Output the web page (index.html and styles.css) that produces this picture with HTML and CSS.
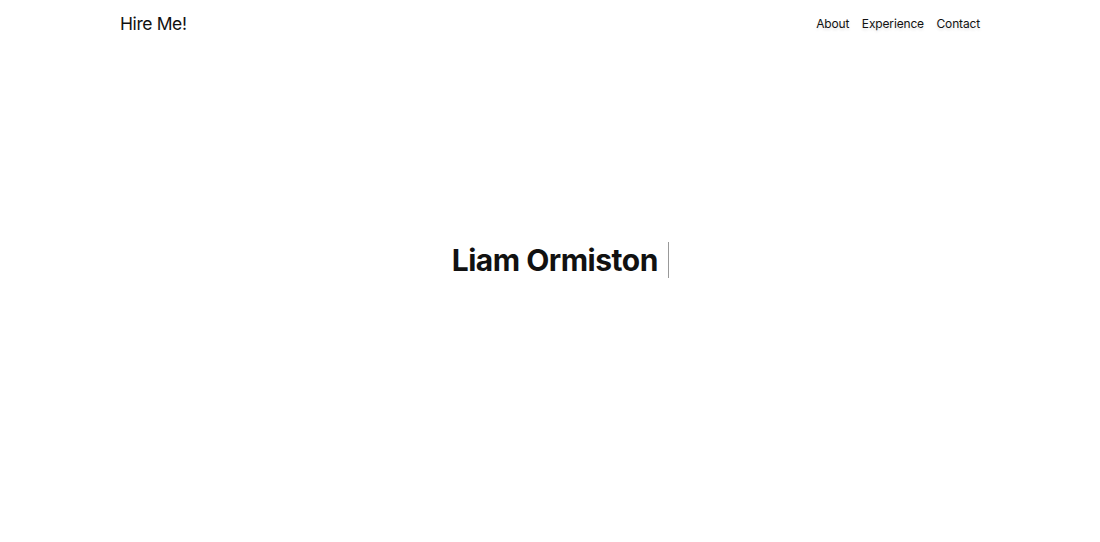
FILE: index.html
```html
<!DOCTYPE html>
<html lang="en">
<head>
<meta charset="utf-8">
<title>Hire Me!</title>
<link rel="stylesheet" href="styles.css">
</head>
<body>
<header class="header">
  <div class="brand">Hire Me!</div>
  <nav class="nav">
    <a href="#about">About</a>
    <a href="#experience">Experience</a>
    <a href="#contact">Contact</a>
  </nav>
</header>
<main class="hero">
  <h1 class="name">Liam Ormiston<span class="cursor"></span></h1>
</main>
</body>
</html>
```

FILE: styles.css
```css
* { box-sizing: border-box; }
html, body { margin: 0; padding: 0; }
body {
  font-family: Inter, "Noto Sans", sans-serif;
  color: #111;
  background: #fff;
  height: 542px;
  display: flex;
  flex-direction: column;
}
.header {
  width: 860px;
  margin: 0 auto;
  display: flex;
  justify-content: space-between;
  align-items: center;
  padding-top: 12px;
}
.brand {
  font-size: 17.5px;
  letter-spacing: -0.4px;
  font-weight: 400;
  color: #111;
  margin-top: 1px;
}
.nav {
  display: flex;
  gap: 12.5px;
}
.nav a {
  font-size: 12px;
  letter-spacing: -0.15px;
  color: #111;
  text-decoration: none;
  text-shadow: 0 2px 3px rgba(0,0,0,0.12);
}
.hero {
  flex: 1;
  display: flex;
  justify-content: center;
  align-items: center;
  padding-bottom: 56px;
  padding-left: 21px;
}
.name {
  margin: 0;
  font-size: 30px;
  letter-spacing: -0.5px;
  font-weight: 700;
  display: flex;
  align-items: center;
}
.cursor {
  display: inline-block;
  width: 1.5px;
  height: 36px;
  background: #999;
  margin-left: 10px;
}
```
